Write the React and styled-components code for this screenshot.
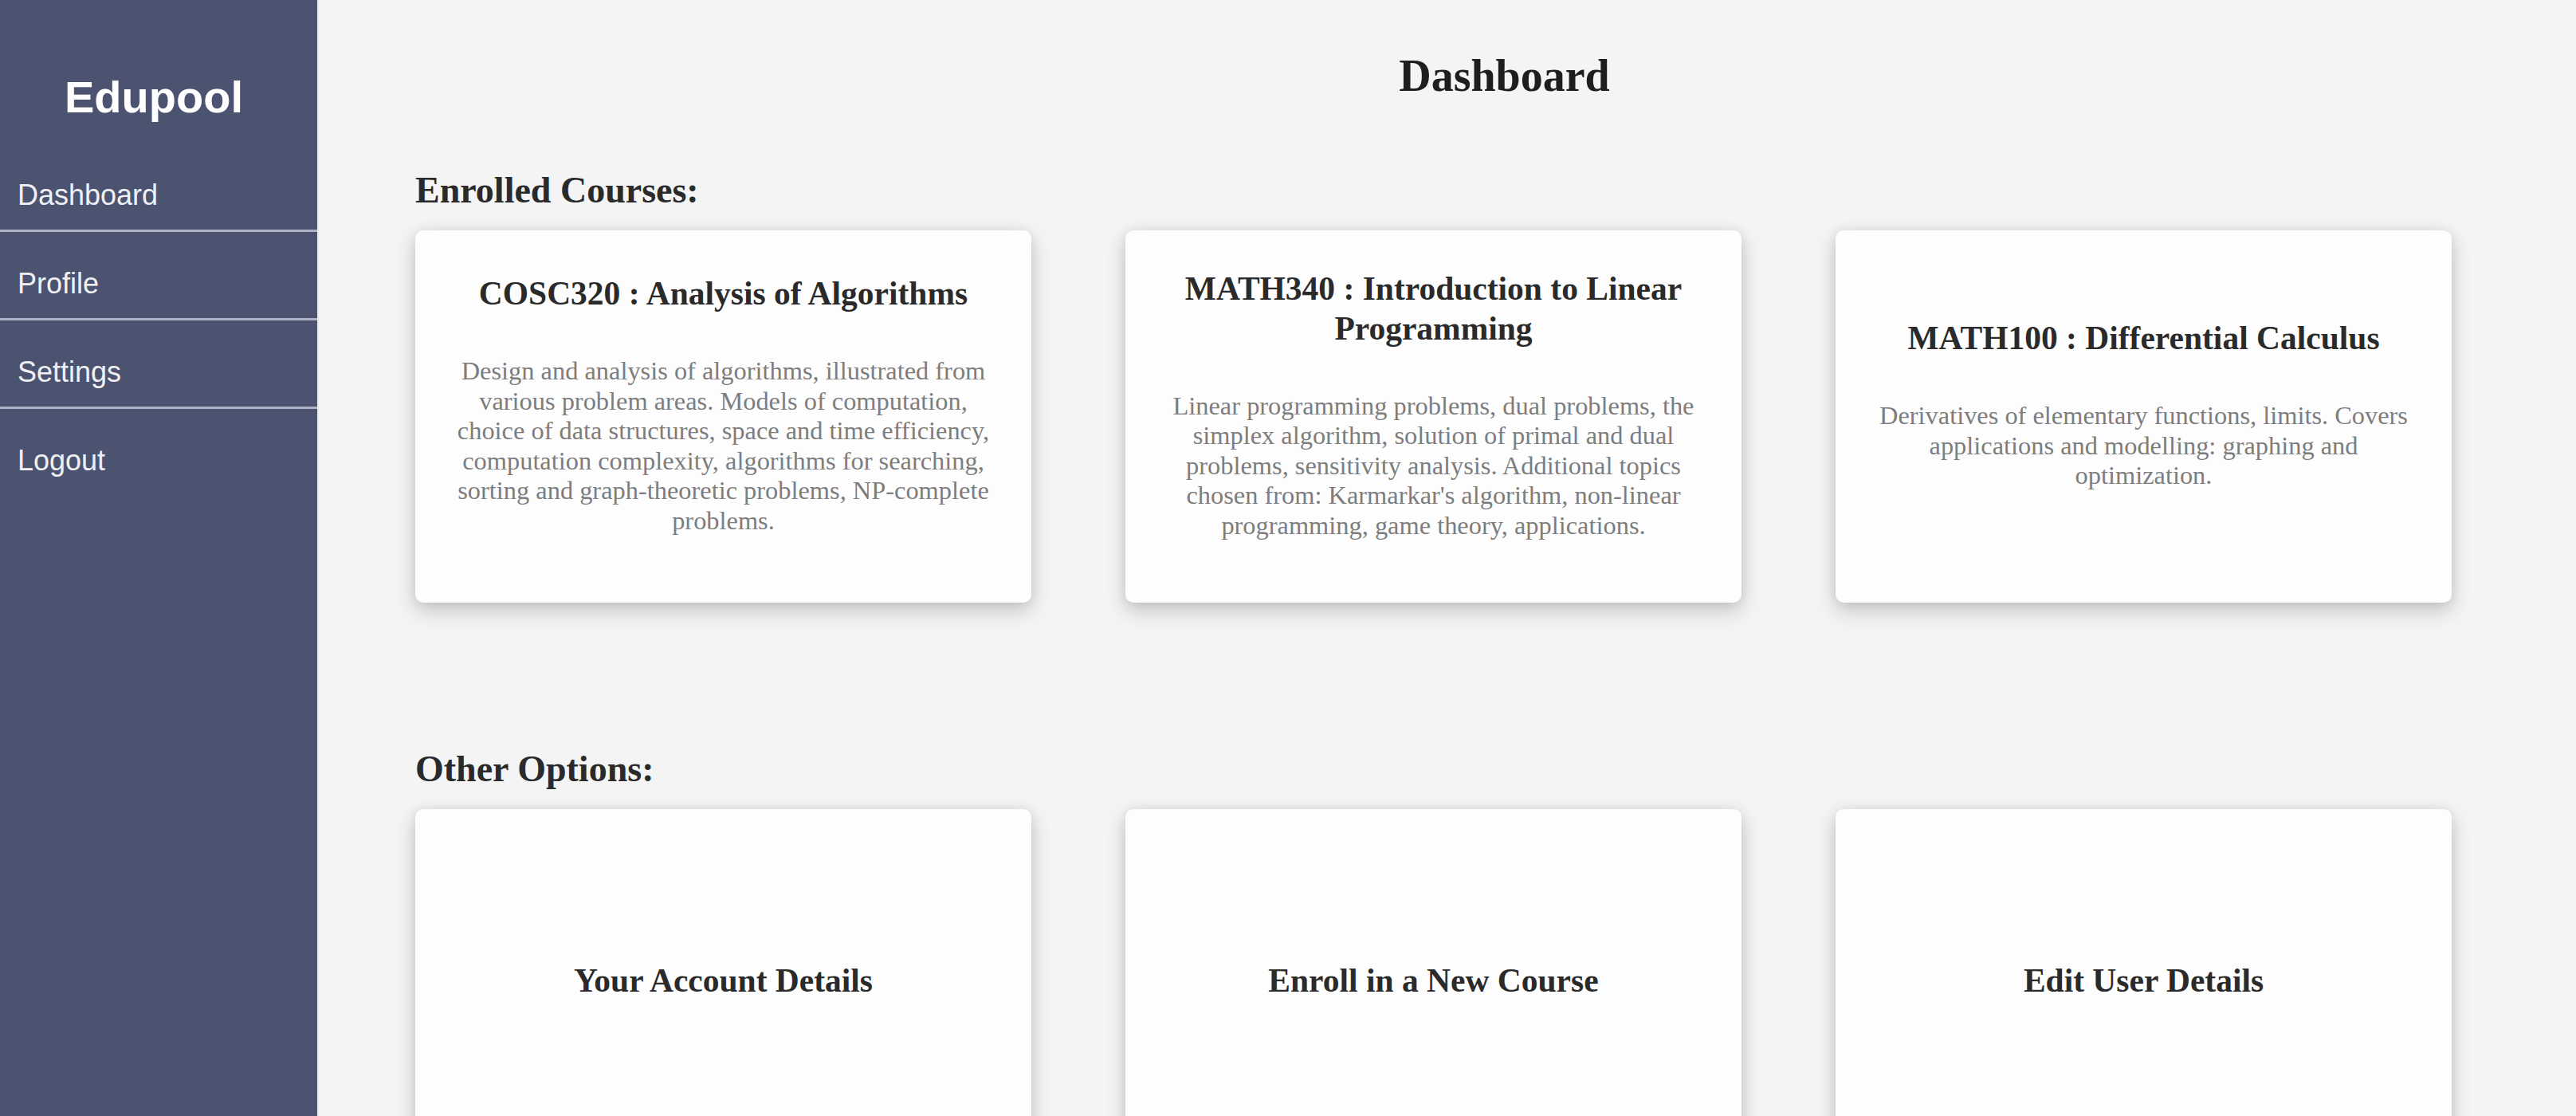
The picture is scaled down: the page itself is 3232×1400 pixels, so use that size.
import React from "react";
import styled, { createGlobalStyle } from "styled-components";

const GlobalStyle = createGlobalStyle`
    html, body {
        margin: 0;
        padding: 0;
        background: #f4f4f4;
    }
    * {
        box-sizing: border-box;
    }
`;

const courses = [
    {
        code: "COSC320",
        name: "Analysis of Algorithms",
        description:
            "Design and analysis of algorithms, illustrated from various problem areas. Models of computation, choice of data structures, space and time efficiency, computation complexity, algorithms for searching, sorting and graph-theoretic problems, NP-complete problems.",
    },
    {
        code: "MATH340",
        name: "Introduction to Linear Programming",
        description:
            "Linear programming problems, dual problems, the simplex algorithm, solution of primal and dual problems, sensitivity analysis. Additional topics chosen from: Karmarkar's algorithm, non-linear programming, game theory, applications.",
    },
    {
        code: "MATH100",
        name: "Differential Calculus",
        description:
            "Derivatives of elementary functions, limits. Covers applications and modelling: graphing and optimization.",
    },
];

const options = ["Your Account Details", "Enroll in a New Course", "Edit User Details"];

const navLinks = ["Dashboard", "Profile", "Settings", "Logout"];

const Layout = styled.div`
    display: flex;
    height: 100vh;
    overflow: hidden;
`;

const Sidebar = styled.aside`
    flex: 0 0 400px;
    background: #4c5371;
    border-right: 2px solid #e9eaf0;
    font-family: "Liberation Sans", Arial, sans-serif;
    color: #f2f2f4;
`;

const Brand = styled.h1`
    margin: 90px 0 26px;
    padding-right: 12px;
    font-size: 56px;
    line-height: 64px;
    font-weight: 700;
    text-align: center;
    color: #ffffff;
`;

const NavList = styled.nav`
    display: flex;
    flex-direction: column;
`;

const NavItem = styled.a`
    display: block;
    padding: 44px 22px 22px;
    font-size: 36px;
    line-height: 42px;
    color: #f0f0f3;
    text-decoration: none;
    border-bottom: 3px solid #aeb3c6;

    &:last-child {
        border-bottom: none;
    }
`;

const Main = styled.main`
    flex: 1;
    padding: 63px 0 0 121px;
    font-family: "Liberation Serif", "Times New Roman", serif;
    color: #1e1e1e;
`;

const PageTitle = styled.h2`
    margin: 0;
    padding-left: 22px;
    font-size: 56px;
    line-height: 64px;
    font-weight: 700;
    text-align: center;
`;

const SectionTitle = styled.h3`
    margin: ${({ $gap }) => $gap}px 0 24px;
    font-size: 46px;
    line-height: 52px;
    font-weight: 700;
    color: #2a2a2a;
`;

const CardRow = styled.div`
    display: grid;
    grid-template-columns: repeat(3, 773px);
    column-gap: 118px;
`;

const Card = styled.div`
    height: 467px;
    background: #fdfdfd;
    border-radius: 10px;
    box-shadow: 0 10px 26px rgba(0, 0, 0, 0.2), 0 0 14px rgba(0, 0, 0, 0.07);
    padding: 0 44px ${({ $bottom }) => $bottom}px;
    display: flex;
    flex-direction: column;
    justify-content: center;
    text-align: center;
`;

const CardTitle = styled.h4`
    margin: 0 0 ${({ $spaced }) => ($spaced ? "54px" : "0")};
    font-size: 41.5px;
    line-height: 50px;
    font-weight: 700;
    color: #2a2a2a;
`;

const CardText = styled.p`
    margin: 0;
    font-size: 32.4px;
    line-height: 37.5px;
    color: #7d7d7d;
`;

const CourseCard = ({ code, name, description }) => (
    <Card $bottom={30}>
        <CardTitle $spaced>{code} : {name}</CardTitle>
        <CardText>{description}</CardText>
    </Card>
);

const OptionCard = ({ label }) => (
    <Card $bottom={38}>
        <CardTitle>{label}</CardTitle>
    </Card>
);

export default function App() {
    return (
        <>
            <GlobalStyle />
            <Layout>
                <Sidebar>
                    <Brand>Edupool</Brand>
                    <NavList>
                        {navLinks.map((link) => (
                            <NavItem key={link} href="#">
                                {link}
                            </NavItem>
                        ))}
                    </NavList>
                </Sidebar>
                <Main>
                    <PageTitle>Dashboard</PageTitle>
                    <SectionTitle $gap={86}>Enrolled Courses:</SectionTitle>
                    <CardRow>
                        {courses.map((course) => (
                            <CourseCard key={course.code} {...course} />
                        ))}
                    </CardRow>
                    <SectionTitle $gap={183}>Other Options:</SectionTitle>
                    <CardRow>
                        {options.map((label) => (
                            <OptionCard key={label} label={label} />
                        ))}
                    </CardRow>
                </Main>
            </Layout>
        </>
    );
}
